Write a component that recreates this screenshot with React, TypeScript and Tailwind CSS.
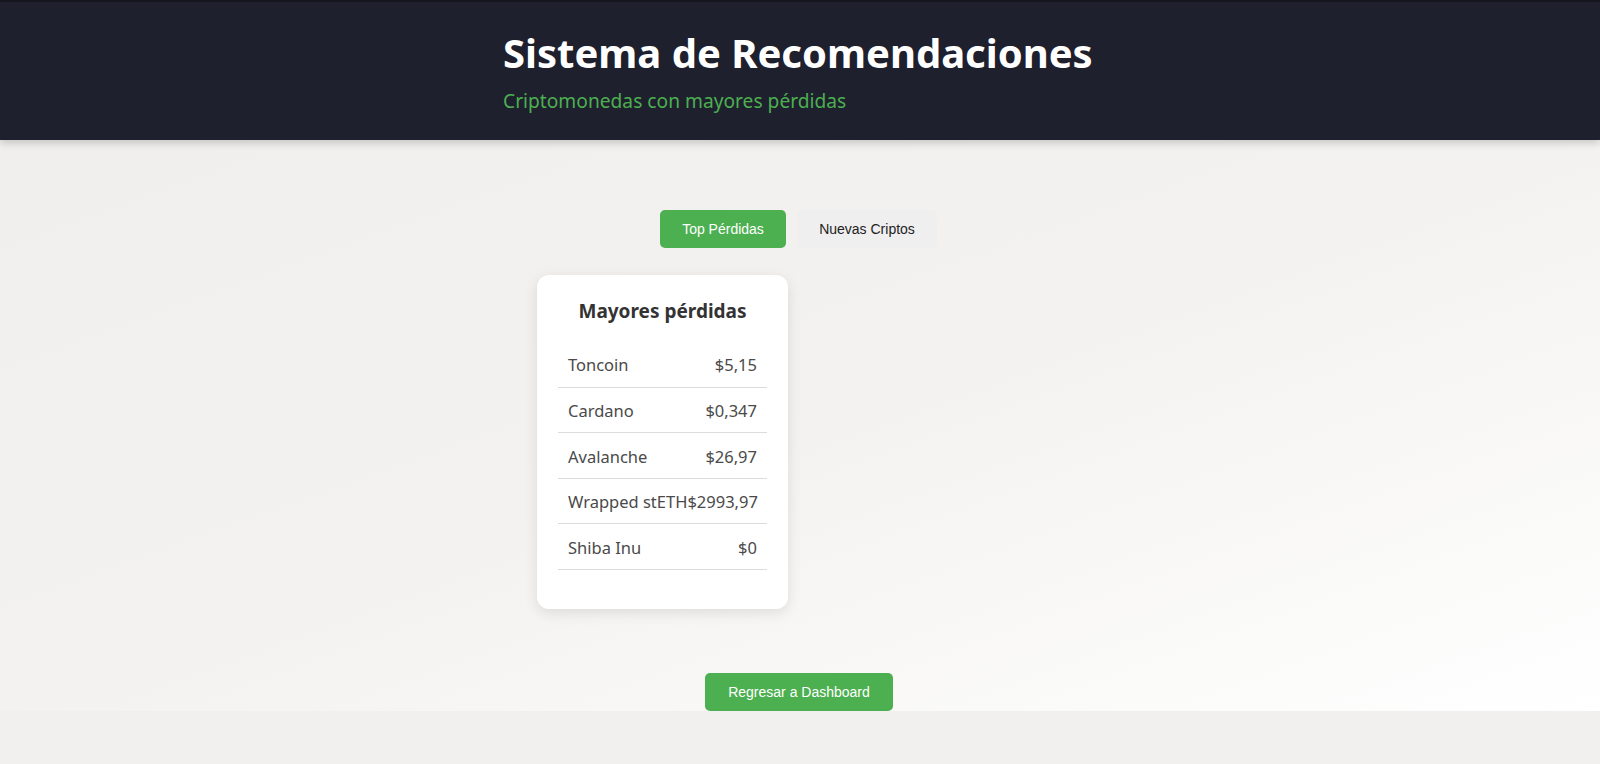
import React from "react";

const rows: [string, string][] = [
  ["Toncoin", "$5,15"],
  ["Cardano", "$0,347"],
  ["Avalanche", "$26,97"],
  ["Wrapped stETH", "$2993,97"],
  ["Shiba Inu", "$0"],
];

export default function App() {
  return (
    <div className="min-h-[764px] bg-[#f1f0ef] font-['Noto_Sans',sans-serif]">
      <header className="relative z-10 h-[140px] box-border border-t-2 border-[#14151d] bg-[#1f202e] pt-[27px] shadow-[0_3px_8px_rgba(0,0,0,0.18)]">
        <div className="flex justify-center">
          <div className="w-[594px]">
            <h1 className="text-[40px] leading-[48px] font-bold text-white">Sistema de Recomendaciones</h1>
            <p className="mt-[10px] text-[19.2px] leading-[27px] text-[#4caf50]">Criptomonedas con mayores pérdidas</p>
          </div>
        </div>
      </header>
      <main className="bg-[linear-gradient(160deg,#f0efed_0%,#f3f2f0_50%,#ffffff_100%)] pt-[70px] flex flex-col items-center">
        <div className="flex gap-[11px] pr-[3px] font-['Liberation_Sans',Arial,sans-serif] text-[14px]">
          <button className="h-[38px] w-[126px] rounded-[5px] bg-[#4caf50] text-white">Top Pérdidas</button>
          <button className="h-[38px] w-[140px] rounded-[5px] bg-[#efefef] text-[#222]">Nuevas Criptos</button>
        </div>
        <div className="mt-[27px] grid w-[526px] grid-cols-2 gap-6">
          <div className="box-border h-[334px] rounded-[12px] bg-white px-[21px] pt-[22px] shadow-[0_4px_14px_rgba(0,0,0,0.10)]">
            <h2 className="text-center text-[19px] leading-[28px] font-bold text-[#333]">Mayores pérdidas</h2>
            <div className="mt-[17px]">
              {rows.map(([n, p]) => (
                <div key={n} className="box-border flex h-[45.6px] items-center justify-between whitespace-nowrap border-b border-[#dcdcdc] px-[10px] pt-[3px] text-[16.5px] text-[#4a4a4a]">
                  <span>{n}</span>
                  <span>{p}</span>
                </div>
              ))}
            </div>
          </div>
        </div>
        <button className="mt-[64px] mr-[2px] h-[38px] w-[188px] rounded-[5px] bg-[#4caf50] font-['Liberation_Sans',Arial,sans-serif] text-[14px] text-white">Regresar a Dashboard</button>
      </main>
    </div>
  );
}
